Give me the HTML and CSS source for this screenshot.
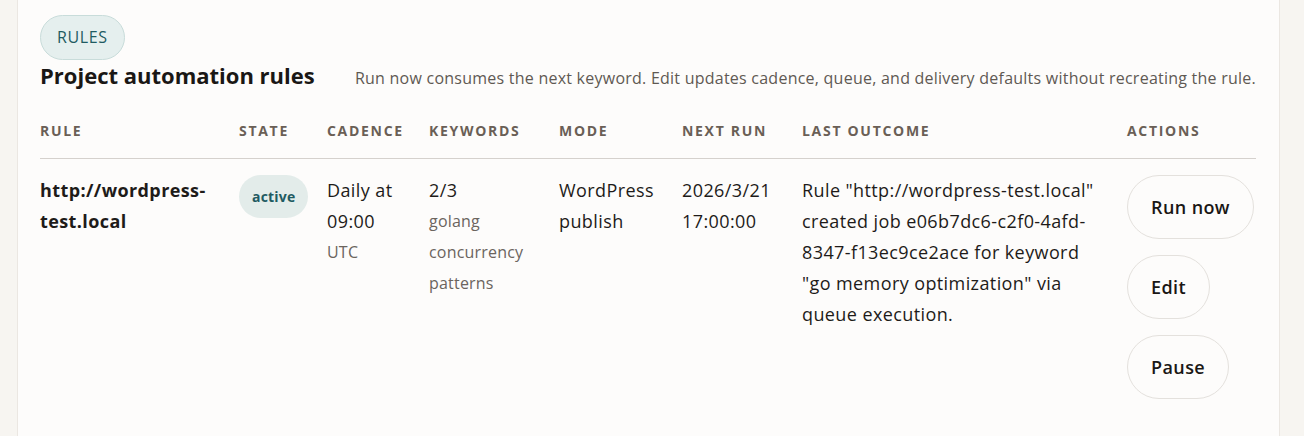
FILE: index.html
```html
<!DOCTYPE html>
<html lang="en">
<head>
<meta charset="utf-8">
<title>Project automation rules</title>
<link rel="stylesheet" href="styles.css">
</head>
<body>
<div class="page">
  <section class="panel">
    <span class="pill">RULES</span>
    <div class="panel-head">
      <h2 class="title">Project automation rules</h2>
      <p class="desc">Run now consumes the next keyword. Edit updates cadence, queue, and delivery defaults without recreating the rule.</p>
    </div>
    <table class="rules">
      <colgroup>
        <col class="c-rule"><col class="c-state"><col class="c-cadence"><col class="c-keywords"><col class="c-mode"><col class="c-next"><col class="c-outcome"><col class="c-actions">
      </colgroup>
      <thead>
        <tr>
          <th>Rule</th><th>State</th><th>Cadence</th><th>Keywords</th><th>Mode</th><th>Next run</th><th>Last outcome</th><th>Actions</th>
        </tr>
      </thead>
      <tbody>
        <tr>
          <td class="rule-name">http://wordpress-test.local</td>
          <td><span class="badge">active</span></td>
          <td>Daily at 09:00<span class="sub">UTC</span></td>
          <td>2/3<span class="sub">golang concurrency patterns</span></td>
          <td>WordPress publish</td>
          <td>2026/3/21 17:00:00</td>
          <td>Rule "http://wordpress-test.local" created job e06b7dc6-c2f0-4afd-8347-f13ec9ce2ace for keyword "go memory optimization" via queue execution.</td>
          <td>
            <div class="actions">
              <button class="btn" type="button">Run now</button>
              <button class="btn" type="button">Edit</button>
              <button class="btn" type="button">Pause</button>
            </div>
          </td>
        </tr>
      </tbody>
    </table>
  </section>
</div>
</body>
</html>
```
FILE: styles.css
```css
* { box-sizing: border-box; }
html, body { margin: 0; }
body {
  background: #f7f5f1;
  font-family: "Open Sans", "Noto Sans", sans-serif;
  color: #1e1b19;
}
.page {
  padding: 0 24px 0 17px;
}
.panel {
  background: #fdfcfb;
  border-left: 1px solid #ebe7e2;
  border-right: 1px solid #ebe7e2;
  padding: 15px 23px 40px 22px;
  min-height: 436px;
}
.pill {
  display: inline-block;
  padding: 8px 16px;
  border: 1px solid #c8dcda;
  background: #e5efee;
  color: #1f5b62;
  border-radius: 999px;
  font-size: 16px;
  line-height: 27px;
  letter-spacing: 0.6px;
}
.panel-head {
  display: flex;
  justify-content: space-between;
  align-items: baseline;
  margin-top: 0;
}
.title {
  margin: 0;
  font-size: 22px;
  line-height: 30px;
  font-weight: 700;
  color: #1a1715;
}
.desc {
  margin: 0;
  font-size: 16px;
  line-height: 26px;
  letter-spacing: 0.24px;
  color: #5f5953;
}
.rules {
  width: 100%;
  margin-top: 28px;
  border-collapse: collapse;
  table-layout: fixed;
}
.c-rule { width: 199px; }
.c-state { width: 88px; }
.c-cadence { width: 102px; }
.c-keywords { width: 130px; }
.c-mode { width: 123px; }
.c-next { width: 120px; }
.c-outcome { width: 325px; }
.c-actions { width: 129px; }
.rules th {
  text-align: left;
  padding: 0 12px 15px 0;
  font-size: 14px;
  line-height: 24px;
  font-weight: 700;
  text-transform: uppercase;
  letter-spacing: 1.7px;
  color: #6a5f56;
  border-bottom: 1px solid #d5d1cd;
  white-space: nowrap;
}
.rules td {
  vertical-align: top;
  padding: 16px 16px 16px 0;
  font-size: 18px;
  line-height: 31px;
  letter-spacing: 0.4px;
  color: #1e1b19;
}
.rules td:last-child { padding-right: 0; }
.rule-name { font-weight: 700; }
.sub {
  display: block;
  font-size: 16px;
  line-height: 31px;
  letter-spacing: 0.2px;
  color: #6b645e;
}
.badge {
  display: inline-block;
  padding: 10px 13px;
  border-radius: 999px;
  background: #e3ecea;
  color: #1f5b62;
  font-size: 14px;
  line-height: 23px;
  letter-spacing: 0.2px;
  font-weight: 700;
}
.actions {
  display: flex;
  flex-direction: column;
  align-items: flex-start;
  gap: 16px;
}
.btn {
  font-family: inherit;
  font-size: 18px;
  font-weight: 600;
  line-height: 30px;
  letter-spacing: 0.4px;
  color: #1a1715;
  background: #fdfcfb;
  border: 1px solid #e4e1dd;
  border-radius: 999px;
  padding: 16px 23px;
  cursor: pointer;
}
```
